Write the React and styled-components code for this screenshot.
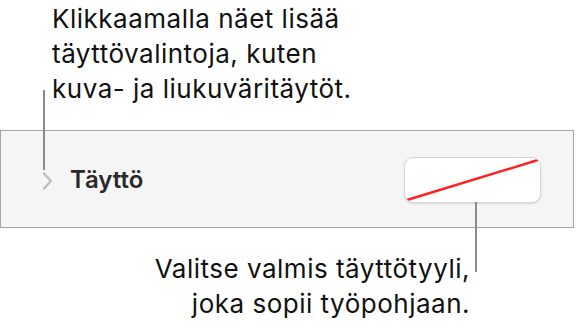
import React from "react";
import styled, { createGlobalStyle } from "styled-components";

const GlobalStyle = createGlobalStyle`
  html, body {
    margin: 0;
    padding: 0;
    background: #ffffff;
  }
  body {
    font-family: "Inter", "Liberation Sans", sans-serif;
  }
`;

const Page = styled.div`
  position: relative;
  width: 577px;
  height: 330px;
  overflow: hidden;
  display: flex;
  flex-direction: column;
`;

const Callout = styled.p`
  margin: 0;
  font-size: 26px;
  line-height: 35px;
  letter-spacing: 0.5px;
  color: #111;
  text-align: ${(p) => (p.$right ? "right" : "left")};
  padding: ${(p) => (p.$right ? "23px 0 0 0" : "1px 0 0 52px")};
  width: ${(p) => (p.$right ? "470px" : "auto")};
`;

const Panel = styled.section`
  margin-top: 24px;
  width: 574px;
  height: 98px;
  box-sizing: border-box;
  border: 1px solid #a4a4a4;
  background: #f5f5f5;
  display: flex;
  align-items: center;
  padding: 0 32px 0 40px;
`;

const Disclosure = styled.svg`
  width: 12px;
  height: 20px;
  flex: none;
  margin-top: 3px;
`;

const Title = styled.span`
  margin-left: 17px;
  font-size: 24px;
  font-weight: 600;
  color: #2a2a2a;
  flex: 1;
`;

const Swatch = styled.div`
  width: 137px;
  height: 46px;
  border-radius: 9px;
  background: #fff;
  border: 1px solid #d6d6d6;
  box-shadow: 0 1px 2px rgba(0, 0, 0, 0.12);
  box-sizing: border-box;
  overflow: hidden;
  margin-top: 2px;
`;

const Leader = styled.div`
  position: absolute;
  width: 2px;
  background: #8a8a8a;
`;

export default function App() {
  return (
    <>
      <GlobalStyle />
      <Page>
        <Callout>
          Klikkaamalla näet lisää
          <br />
          täyttövalintoja, kuten
          <br />
          kuva- ja liukuväritäytöt.
        </Callout>
        <Panel>
          <Disclosure viewBox="0 0 12 20">
            <polyline
              points="3,2.5 10,10 3,17.5"
              fill="none"
              stroke="#bdbdbd"
              strokeWidth="2.4"
              strokeLinecap="round"
              strokeLinejoin="round"
            />
          </Disclosure>
          <Title>Täyttö</Title>
          <Swatch>
            <svg width="135" height="44" viewBox="0 0 135 44">
              <line x1="2" y1="42" x2="133" y2="2" stroke="#ff2121" strokeWidth="2.4" />
            </svg>
          </Swatch>
        </Panel>
        <Callout $right>
          Valitse valmis täyttötyyli,
          <br />
          joka sopii työpohjaan.
        </Callout>
        <Leader style={{ left: 43, top: 90, height: 80 }} />
        <Leader style={{ left: 475, top: 202, height: 70 }} />
      </Page>
    </>
  );
}
